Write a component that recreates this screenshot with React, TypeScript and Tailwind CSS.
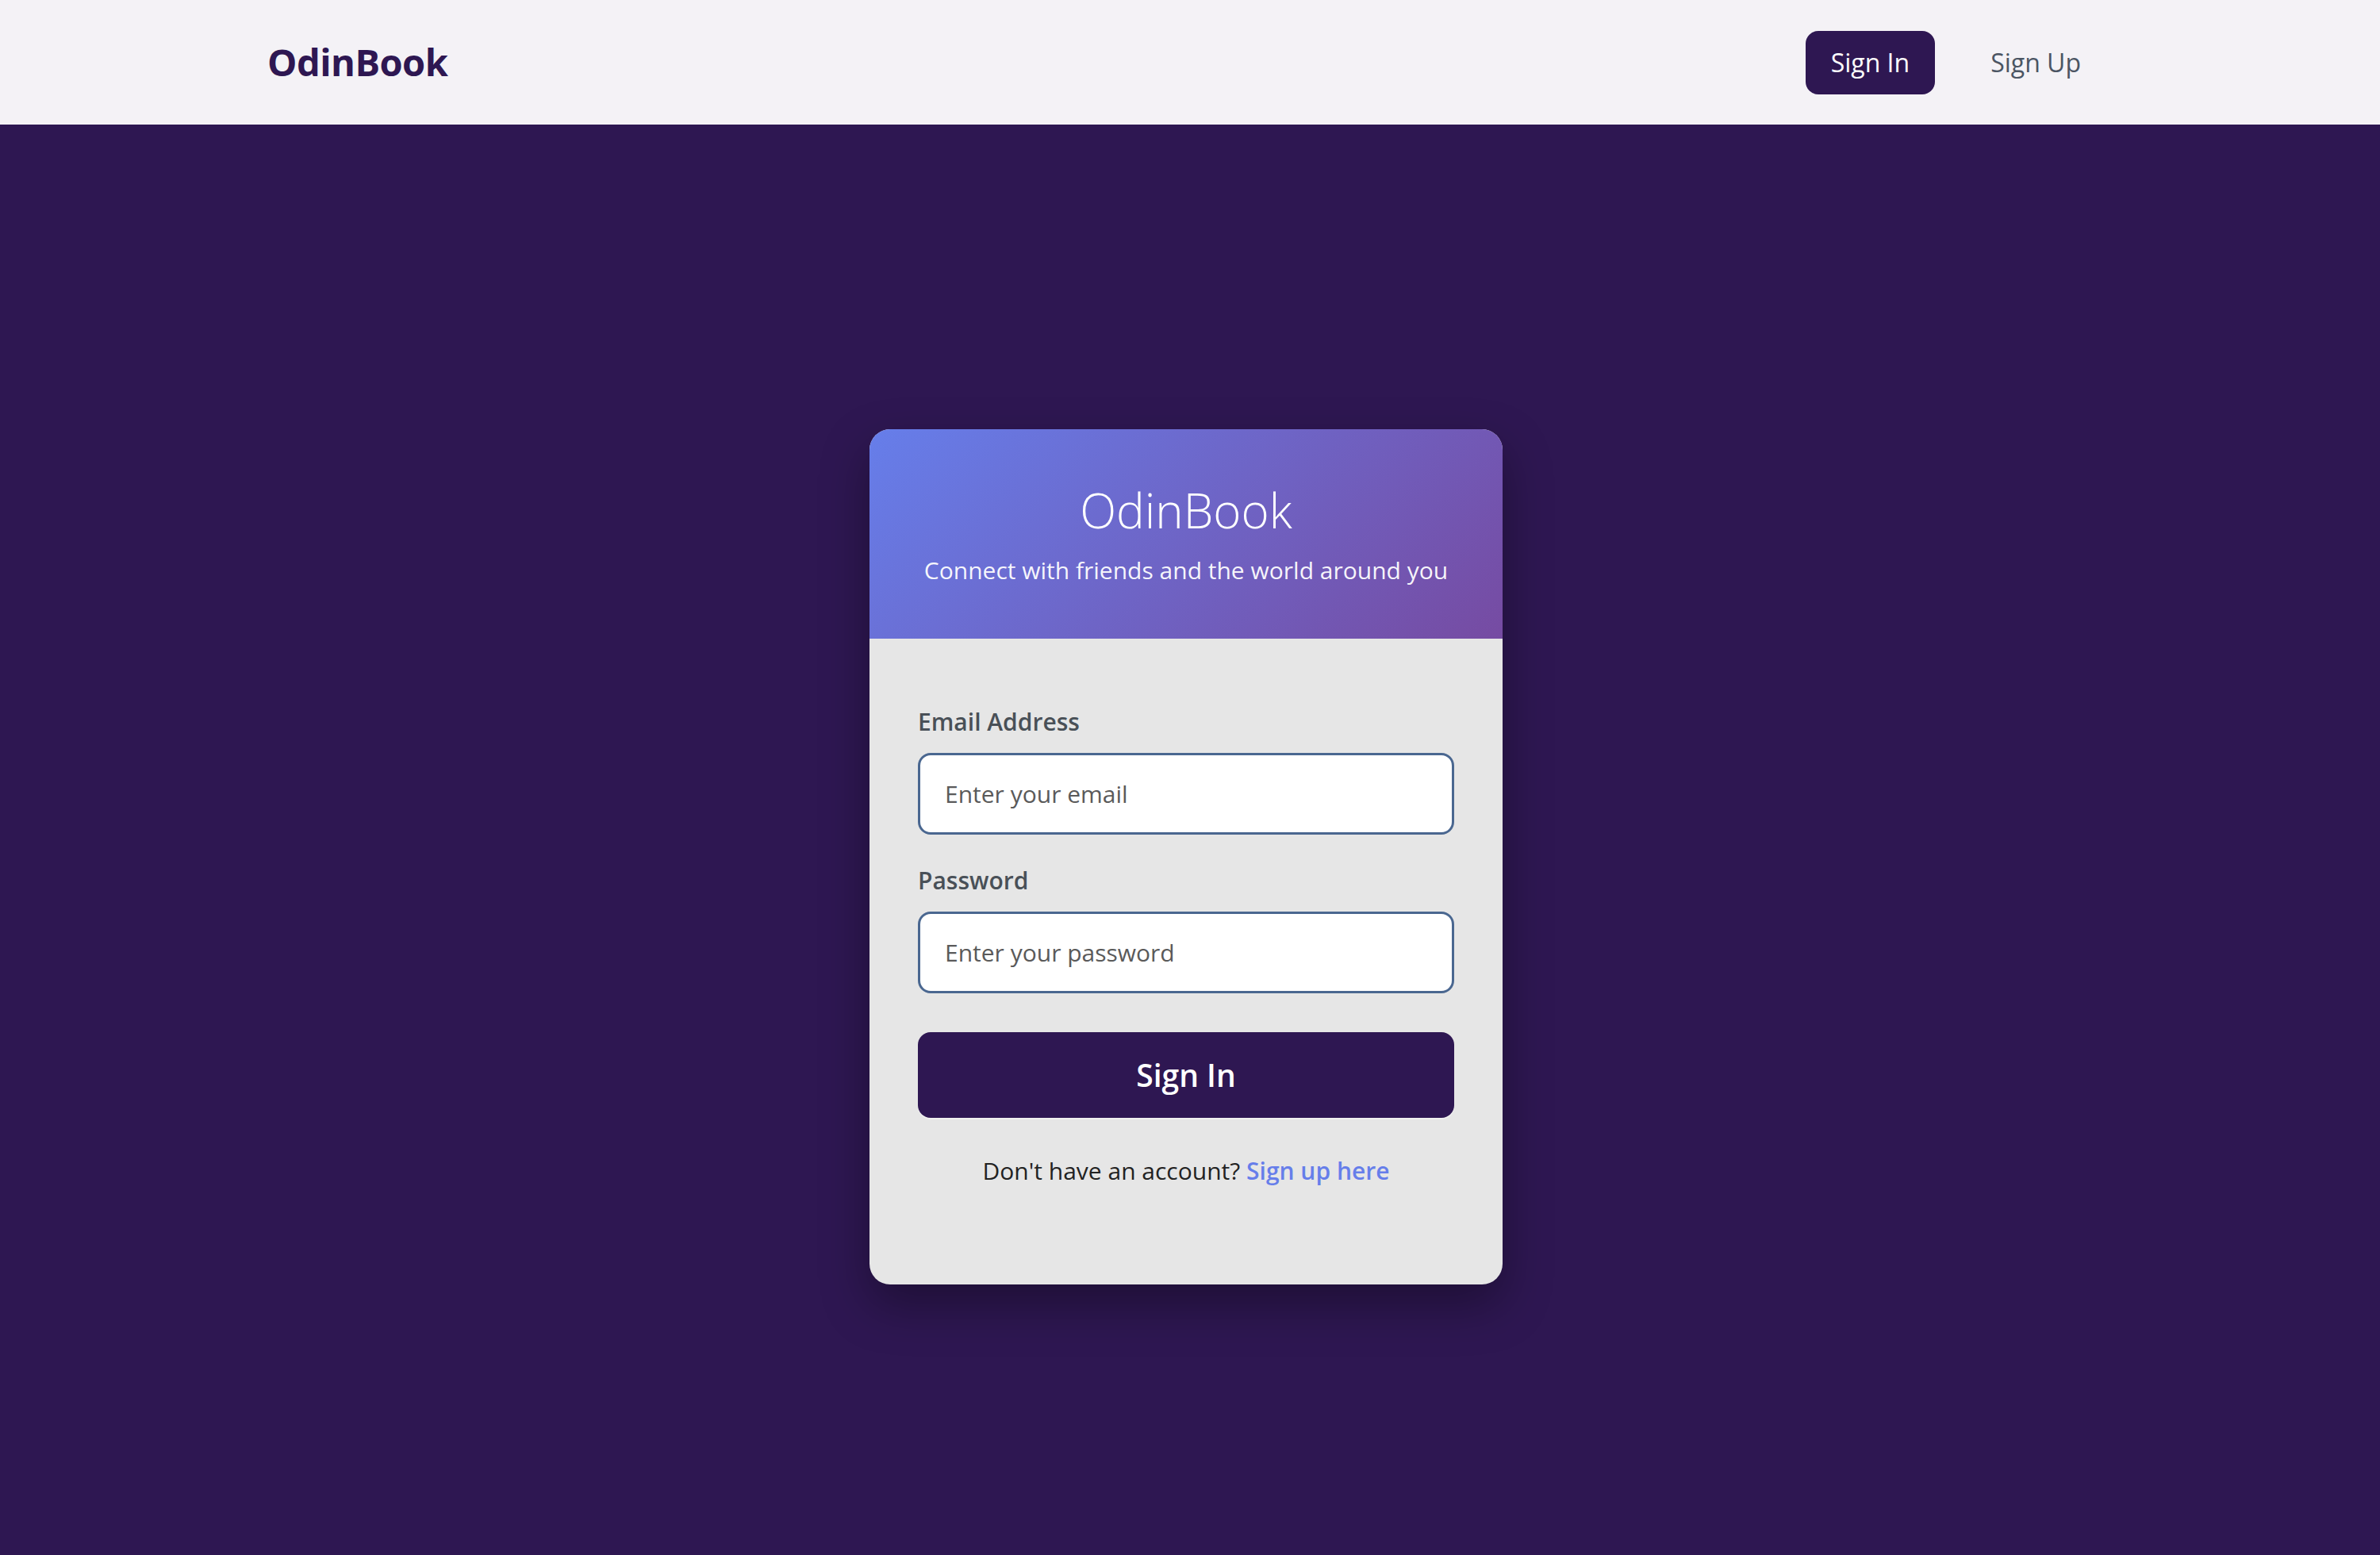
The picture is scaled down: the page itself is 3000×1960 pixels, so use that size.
const App = () => {
  return (
    <div className="min-h-screen bg-[#2e1752] font-['Open_Sans',sans-serif] pr-[10px]">
      {/* Top navigation */}
      <header className="h-[157px] bg-[#f4f2f6] flex items-center -mr-[10px]">
        <div className="ml-[337px] w-[2318px] flex items-center justify-between">
          <span className="text-[47px] font-bold text-[#2e1752] tracking-[-0.5px]">
            OdinBook
          </span>
          <nav className="flex items-center gap-[38px]">
            <a className="h-[80px] px-[32px] rounded-[16px] bg-[#2e1752] text-white text-[32px] flex items-center cursor-pointer">
              Sign In
            </a>
            <a className="px-[32px] text-[32px] text-[#4b5563] cursor-pointer">
              Sign Up
            </a>
          </nav>
        </div>
      </header>

      {/* Login card */}
      <main className="flex justify-center pt-[384px] pb-[341px]">
        <div className="w-[798px] rounded-[26px] overflow-hidden bg-[#e6e6e6] shadow-[0_25px_60px_rgba(0,0,0,0.35)]">
          <div className="h-[264px] bg-[linear-gradient(135deg,#667eea_0%,#764ba2_100%)] flex flex-col items-center justify-center text-white">
            <h1 className="text-[60px] font-light leading-[76px] -mt-[2px]">OdinBook</h1>
            <p className="text-[30px] leading-[40px] mt-[18px] text-white/95">
              Connect with friends and the world around you
            </p>
          </div>

          <form className="px-[61px] pt-[83px] pb-[122px] flex flex-col">
            <label className="text-[30px] leading-[44px] font-semibold text-[#495057]">
              Email Address
            </label>
            <input
              type="email"
              placeholder="Enter your email"
              className="mt-[17px] h-[103px] w-full rounded-[16px] border-[3px] border-[#4a6790] bg-white px-[31px] text-[30px] text-[#333] placeholder:text-[#5a5a5a] outline-none"
            />

            <label className="mt-[36px] text-[30px] leading-[44px] font-semibold text-[#495057]">
              Password
            </label>
            <input
              type="password"
              placeholder="Enter your password"
              className="mt-[17px] h-[103px] w-full rounded-[16px] border-[3px] border-[#4a6790] bg-white px-[31px] text-[30px] text-[#333] placeholder:text-[#5a5a5a] outline-none"
            />

            <button
              type="button"
              className="mt-[49px] h-[108px] w-full rounded-[16px] bg-[#2e1752] text-white text-[39px] font-semibold shadow-[0_2px_0_rgba(255,255,255,0.4)]"
            >
              Sign In
            </button>

            <p className="mt-[46px] text-center text-[30px] leading-[42px] text-[#222]">
              Don't have an account?{" "}
              <a className="font-semibold text-[#667eea] cursor-pointer">Sign up here</a>
            </p>
          </form>
        </div>
      </main>
    </div>
  );
};

export default App;
